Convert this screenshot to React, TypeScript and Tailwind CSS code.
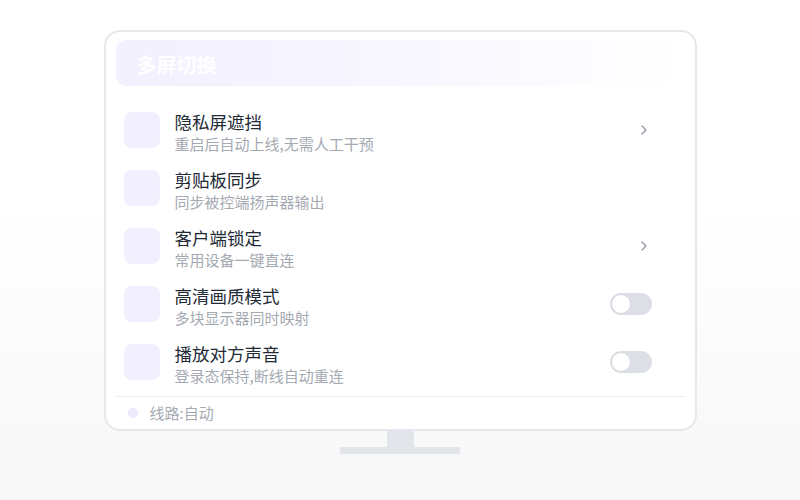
import React from 'react';

type Row = {
  title: string;
  desc: string;
  right: 'chevron' | 'toggle' | 'none';
};

const rows: Row[] = [
  { title: '隐私屏遮挡', desc: '重启后自动上线,无需人工干预', right: 'chevron' },
  { title: '剪贴板同步', desc: '同步被控端扬声器输出', right: 'none' },
  { title: '客户端锁定', desc: '常用设备一键直连', right: 'chevron' },
  { title: '高清画质模式', desc: '多块显示器同时映射', right: 'toggle' },
  { title: '播放对方声音', desc: '登录态保持,断线自动重连', right: 'toggle' },
];

const Toggle = () => (
  <div className="w-[42px] h-[22px] rounded-full bg-[#dcdfe5] relative">
    <div className="absolute left-px top-px w-[20px] h-[20px] rounded-full bg-white border border-[#d4d7dd]" />
  </div>
);

const Chevron = () => (
  <svg width="6" height="10" viewBox="0 0 6 10" fill="none">
    <path d="M1 1l4 4-4 4" stroke="#8d939c" strokeWidth="1.3" strokeLinecap="round" strokeLinejoin="round" />
  </svg>
);

export default function App() {
  return (
    <div
      className="w-[800px] h-[500px] bg-gradient-to-b from-white from-40% to-[#f7f7f8] flex flex-col items-center pt-[30px]"
      style={{ fontFamily: '"Noto Sans CJK SC", "Noto Sans", sans-serif' }}
    >
      <div className="w-[593px] h-[401px] bg-white border-2 border-[#e4e7eb] rounded-[16px] px-[10px] pt-2 flex flex-col">
        <div className="h-[46px] rounded-[10px] bg-gradient-to-r from-[#f3f0ff] via-[#f8f6ff] to-white flex items-center pl-[21px] pt-1">
          <span className="text-white text-[20px] font-bold leading-none">多屏切换</span>
        </div>

        <div className="mt-[25px] flex flex-col gap-[14px]">
          {rows.map((row) => (
            <div key={row.title} className="h-[44px] flex items-start pl-2 pr-[33px]">
              <div className="w-9 h-9 mt-px rounded-[8px] bg-[#f2effe] shrink-0" />
              <div className="ml-[15px] flex flex-col flex-1">
                <span className="text-[17.5px] leading-[22px] text-[#222a35]">{row.title}</span>
                <span className="text-[15px] leading-[22px] text-[#a5aab2]">{row.desc}</span>
              </div>
              {row.right === 'chevron' && (
                <div className="h-[38px] flex items-center mr-[5px]">
                  <Chevron />
                </div>
              )}
              {row.right === 'toggle' && (
                <div className="h-[38px] flex items-center">
                  <Toggle />
                </div>
              )}
            </div>
          ))}
        </div>

        <div className="mt-[9px] border-t border-[#eceef1] h-[33px] flex items-center pl-3">
          <div className="w-[10px] h-[10px] rounded-full bg-[#eeeafd]" />
          <span className="ml-[12px] text-[15px] text-[#a5aab2]">线路:自动</span>
        </div>
      </div>
      <div className="w-[27px] h-[16px] bg-[#e2e5ea]" />
      <div className="w-[120px] h-[7px] bg-[#e2e5ea]" />
    </div>
  );
}
